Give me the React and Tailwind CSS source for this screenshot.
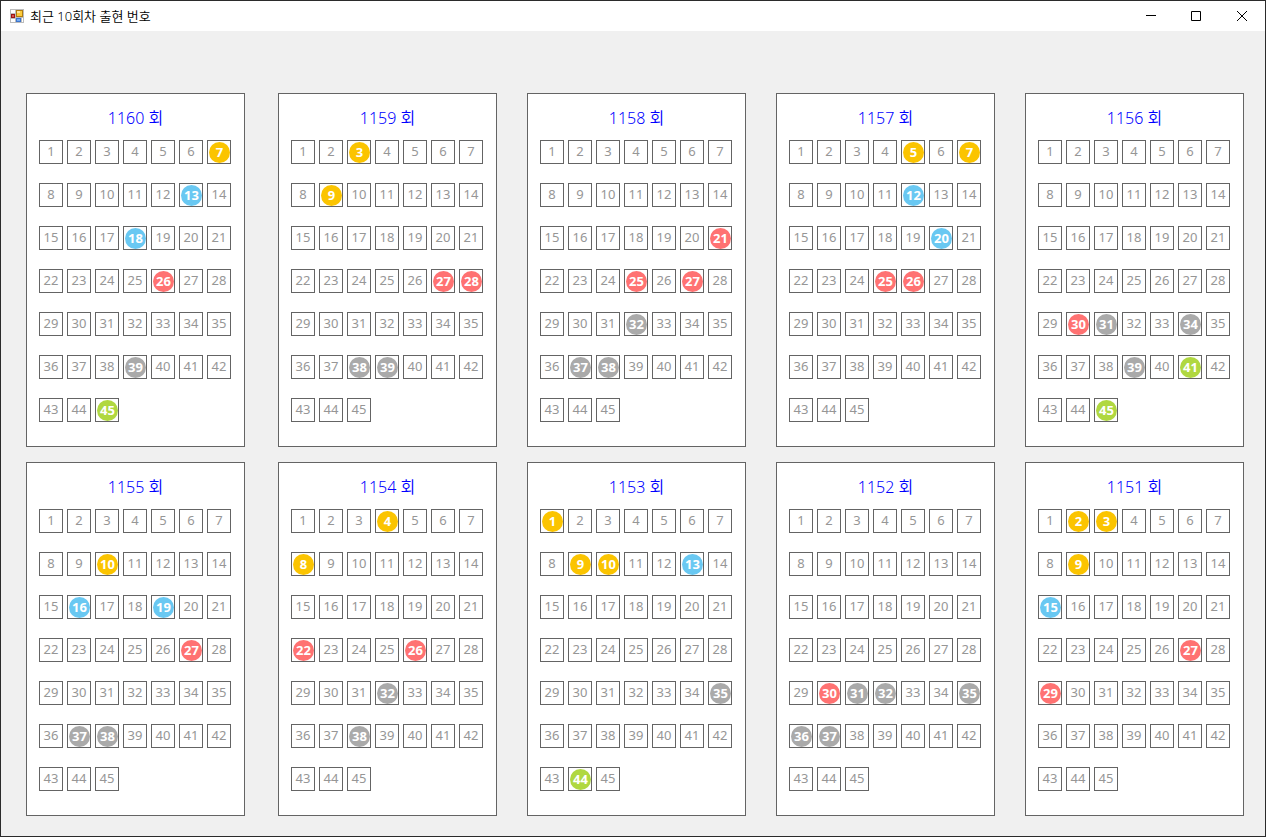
import clsx from 'clsx';

const DRAWS = [
  { round: 1160, numbers: [7, 13, 18, 26, 39, 45] },
  { round: 1159, numbers: [3, 9, 27, 28, 38, 39] },
  { round: 1158, numbers: [21, 25, 27, 32, 37, 38] },
  { round: 1157, numbers: [5, 7, 12, 20, 25, 26] },
  { round: 1156, numbers: [30, 31, 34, 39, 41, 45] },
  { round: 1155, numbers: [10, 16, 19, 27, 37, 38] },
  { round: 1154, numbers: [4, 8, 22, 26, 32, 38] },
  { round: 1153, numbers: [1, 9, 10, 13, 35, 44] },
  { round: 1152, numbers: [30, 31, 32, 35, 36, 37] },
  { round: 1151, numbers: [2, 3, 9, 15, 27, 29] },
];

const ALL_NUMBERS = Array.from({ length: 45 }, (_, i) => i + 1);

const ballColor = (n) => {
  if (n <= 10) return 'bg-[#fbc400]';
  if (n <= 20) return 'bg-[#69c8f2]';
  if (n <= 30) return 'bg-[#ff7272]';
  if (n <= 40) return 'bg-[#aaaaaa]';
  return 'bg-[#b0d840]';
};

function AppIcon() {
  return (
    <svg width="14" height="14" viewBox="0 0 14 14" shapeRendering="crispEdges" aria-hidden="true">
      <rect width="14" height="14" fill="#bcbcbc" />
      <rect x="1" y="1" width="4" height="3" fill="#fff" />
      <rect x="1" y="10" width="4" height="3" fill="#fff" />
      <rect x="12" y="9" width="1" height="4" fill="#fff" />
      <rect x="6" y="1" width="7" height="7" fill="#b07c10" />
      <rect x="7" y="2" width="5" height="5" fill="#fccb3c" />
      <rect x="7" y="2" width="3" height="2" fill="#fde49a" />
      <rect x="1" y="5" width="4" height="4" fill="#9c1515" />
      <rect x="2" y="6" width="2" height="2" fill="#d8544c" />
      <rect x="6" y="9" width="5" height="4" fill="#3c74cc" />
      <rect x="7" y="10" width="3" height="2" fill="#74acf4" />
    </svg>
  );
}

function WindowButton({ label, children }) {
  return (
    <button type="button" aria-label={label} className="flex h-full w-[46px] items-center justify-center hover:bg-gray-200">
      <svg width="12" height="12" viewBox="0 0 12 12" fill="none" stroke="#000" aria-hidden="true">
        {children}
      </svg>
    </button>
  );
}

function TitleBar() {
  return (
    <header className="flex h-[30px] items-center bg-white pl-[9px]">
      <AppIcon />
      <h1 className="ml-[6px] flex-1 text-[13px] leading-4 font-[350] text-black">최근 10회차 출현 번호</h1>
      <div className="flex h-full">
        <WindowButton label="최소화">
          <path d="M2 5.5h10" />
        </WindowButton>
        <WindowButton label="최대화">
          <path d="M1.5 1.5h9v9h-9z" />
        </WindowButton>
        <WindowButton label="닫기">
          <path d="M1 1l10 10M11 1L1 11" />
        </WindowButton>
      </div>
    </header>
  );
}

function NumberCell({ n, drawn }) {
  return (
    <li
      className={clsx(
        'flex size-6 border border-[#646464] text-[13px]',
        drawn ? 'items-end justify-end' : 'items-center justify-center text-[#969696]'
      )}
    >
      {drawn ? (
        <span className={clsx('flex size-[21px] items-center justify-center rounded-full font-bold text-white', ballColor(n))}>
          {n}
        </span>
      ) : (
        n
      )}
    </li>
  );
}

function DrawCard({ round, numbers }) {
  return (
    <section className="w-[219px] border border-[#646464] bg-white px-3 pt-3 pb-6">
      <h2 className="mb-[10px] text-center text-[16px] leading-6 font-[350] text-[#0000ff]">{round} 회</h2>
      <ol className="grid grid-cols-[repeat(7,24px)] gap-x-1 gap-y-[19px]">
        {ALL_NUMBERS.map((n) => (
          <NumberCell key={n} n={n} drawn={numbers.includes(n)} />
        ))}
      </ol>
    </section>
  );
}

export default function App() {
  return (
    <div className="flex min-h-screen flex-col border border-[#2b2b2b] bg-[#f0f0f0] font-['Noto_Sans','Noto_Sans_CJK_KR',sans-serif]">
      <TitleBar />
      <main className="grid grid-cols-[222px_repeat(4,219px)] justify-between gap-y-[15px] pt-[62px] pr-[21px] pb-5 pl-[25px]">
        {DRAWS.map((draw) => (
          <DrawCard key={draw.round} {...draw} />
        ))}
      </main>
    </div>
  );
}
